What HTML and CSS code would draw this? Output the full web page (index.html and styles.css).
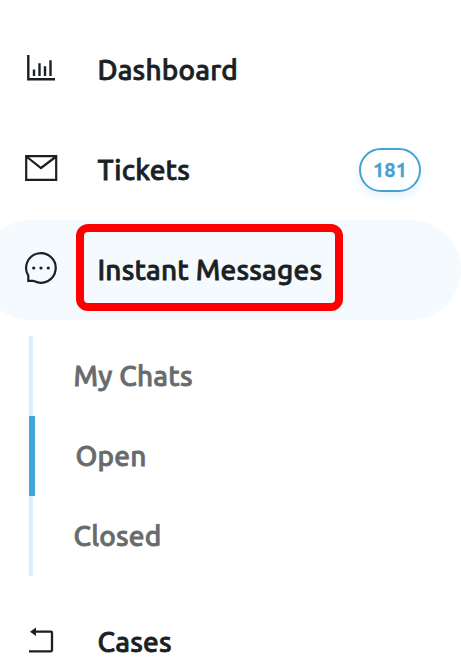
FILE: index.html
```html
<!DOCTYPE html>
<html lang="en">
<head>
<meta charset="utf-8">
<title>Navigation</title>
<link rel="stylesheet" href="styles.css">
</head>
<body>
<nav class="nav">
  <a class="item">
    <svg class="icon" viewBox="0 0 40 40"><path d="M8.300 7v24.300H35M14 21.500v6.500M19.500 15.200v12.800M25 18.200v9.800M30.500 12.200v15.800" fill="none" stroke="currentColor" stroke-width="2.400"/></svg>
    <span class="label">Dashboard</span>
  </a>
  <a class="item">
    <svg class="icon" viewBox="0 0 40 40"><path d="M6.200 8.200h30v23.600h-30zM7 9l14 11L35.500 9" fill="none" stroke="currentColor" stroke-width="2.200"/></svg>
    <span class="label">Tickets</span>
    <span class="badge">181</span>
  </a>
  <a class="item active">
    <svg class="icon" viewBox="0 0 40 40"><path d="M8.300 27.700A14.800 14.800 0 1 1 14.500 33.300Q13.800 32.800 13 32.800H8.300z" fill="none" stroke="currentColor" stroke-width="2.200"/><g fill="currentColor"><circle cx="13.700" cy="20" r="1.600"/><circle cx="21" cy="20" r="1.600"/><circle cx="28.300" cy="20" r="1.600"/></g></svg>
    <span class="label">Instant Messages</span>
    <span class="highlight"></span>
  </a>
  <div class="subnav">
    <a class="sub"><span class="label">My Chats</span></a>
    <a class="sub current"><span class="label">Open</span></a>
    <a class="sub"><span class="label">Closed</span></a>
  </div>
  <a class="item">
    <svg class="icon" viewBox="0 0 40 40"><path d="M9 31.300h22q1 0 1-1V12.700q0-1-1-1H15" fill="none" stroke="currentColor" stroke-width="2.300"/><path d="M10 11.700l6-4.200v8.400z" fill="currentColor"/></svg>
    <span class="label">Cases</span>
  </a>
</nav>
</body>
</html>
```
FILE: styles.css
```css
* { box-sizing: border-box; }
html, body { margin: 0; overflow: hidden; background: #fff; }
body { height: 669px; font-family: Ubuntu, "Noto Sans", "Open Sans", sans-serif; }
.nav { padding-top: 20px; }
.item {
  position: relative;
  display: flex;
  align-items: center;
  height: 100px;
  padding: 0 40px 0 20px;
  color: #1a1f23;
}
.icon { flex: none; width: 40px; height: 40px; margin: 0 37.4px 4px 0; }
.label {
  font-size: 28px;
  font-weight: 500;
  letter-spacing: 0.2px;
  line-height: 40px;
  white-space: nowrap;
  -webkit-text-stroke: 0.8px currentColor;
}
.badge {
  width: 62px;
  height: 44px;
  margin-left: auto;
  border: 2px solid #47a2d2;
  border-radius: 22px;
  background: #fff;
  box-shadow: 0 4px 10px #e2f3fc;
  color: #47a2d2;
  font-size: 20px;
  font-weight: 700;
  line-height: 40px;
  text-align: center;
  -webkit-text-stroke: 0.3px currentColor;
}
.active { margin-left: -20px; padding-left: 40px; border-radius: 50px; background: #f5fafe; }
.highlight {
  position: absolute;
  left: 96px;
  top: 4px;
  width: 267px;
  height: 87px;
  border: 8px solid #f00;
  border-radius: 12px;
}
.subnav { margin: 16px 0 16px 29px; }
.sub {
  display: flex;
  align-items: center;
  height: 80px;
  padding-left: 40.5px;
  border-left: 4px solid #dceef8;
  color: #686a6c;
}
.sub.current { border-left: 6px solid #40a6da; }
```
